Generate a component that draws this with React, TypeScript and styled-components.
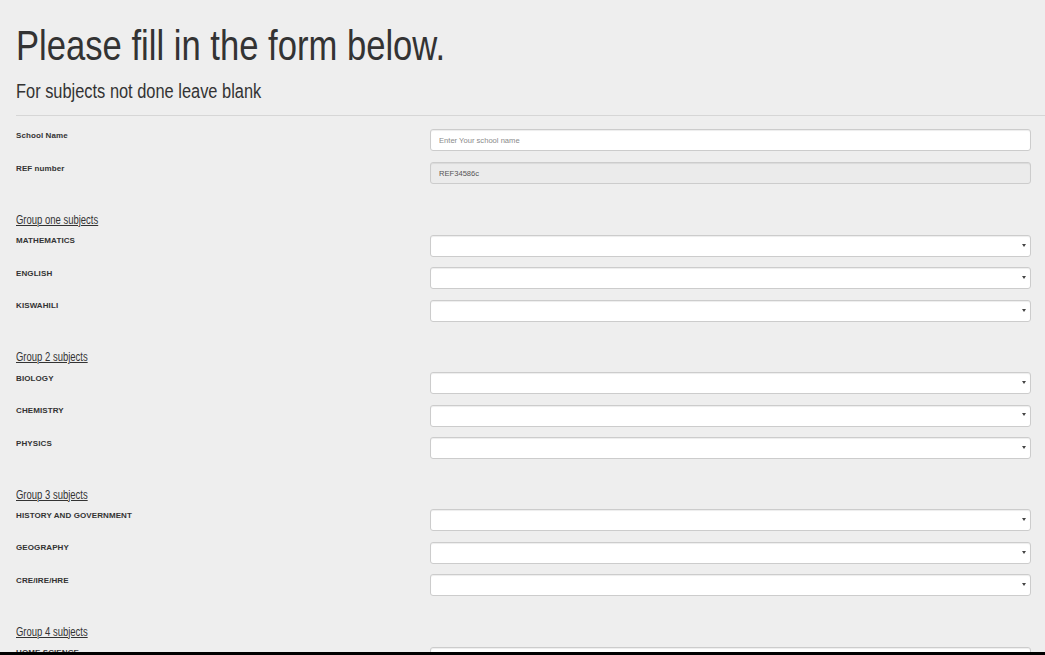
import React from "react";
import styled, { createGlobalStyle } from "styled-components";

const GlobalStyle = createGlobalStyle`
  html, body {
    margin: 0;
    padding: 0;
    background: #eeeeee;
    overflow: hidden;
  }
  body {
    font-family: "Liberation Sans", Arial, sans-serif;
    color: #333333;
  }
  * { box-sizing: border-box; }
`;

const Page = styled.div`
  padding-top: 21px;
  padding-bottom: 40px;
`;

/* The reference renders its headings in a narrow Helvetica; no narrow face is
   installed, so the regular face is condensed horizontally. */
const Narrow = styled.span<{ $scale: number }>`
  display: inline-block;
  transform: scaleX(${(p) => p.$scale});
  transform-origin: left center;
  white-space: nowrap;
`;

const Title = styled.h1`
  margin: 0 0 0 16px;
  font-family: "Liberation Sans", Arial, sans-serif;
  font-weight: normal;
  font-size: 43px;
  line-height: 48px;
  color: #333333;
`;

const Subtitle = styled.h4`
  margin: 10px 0 0 16px;
  font-family: "Liberation Sans", Arial, sans-serif;
  font-weight: normal;
  font-size: 20px;
  line-height: 24px;
  color: #333333;
`;

const Rule = styled.hr`
  margin: 12px 0 0 16px;
  border: 0;
  border-top: 1px solid #d6d6d6;
  height: 0;
`;

const Form = styled.form`
  display: flex;
  flex-direction: column;
  padding: 13px 14px 0 16px;
`;

const TopFields = styled.div`
  display: flex;
  flex-direction: column;
  gap: 11px;
`;

const Row = styled.div`
  display: grid;
  grid-template-columns: 414px 1fr;
  height: 22px;
`;

const Label = styled.label`
  padding-top: 1px;
  font-family: "Liberation Sans", Arial, sans-serif;
  font-weight: bold;
  font-size: 8px;
  line-height: 11px;
  letter-spacing: 0.1px;
  color: #333333;
`;

const TextInput = styled.input<{ $disabled?: boolean }>`
  width: 100%;
  height: 22px;
  padding: 0 8px;
  border: 1px solid #cccccc;
  border-radius: 3px;
  background: ${(p) => (p.$disabled ? "#ebebeb" : "#ffffff")};
  box-shadow: inset 0 1px 1px rgba(0, 0, 0, 0.075);
  font-family: "Liberation Sans", Arial, sans-serif;
  font-size: 7.6px;
  color: #555555;
  outline: none;
  &::placeholder {
    color: #8a8a8a;
  }
`;

const SelectWrap = styled.div`
  position: relative;
  &::after {
    content: "";
    position: absolute;
    right: 5px;
    top: 50%;
    margin-top: -2px;
    border-left: 2px solid transparent;
    border-right: 2px solid transparent;
    border-top: 3px solid #444444;
  }
`;

const Select = styled.select`
  appearance: none;
  -webkit-appearance: none;
  width: 100%;
  height: 22px;
  padding: 0 8px;
  border: 1px solid #cccccc;
  border-radius: 3px;
  background: #ffffff;
  box-shadow: inset 0 1px 1px rgba(0, 0, 0, 0.075);
  font-family: "Liberation Sans", Arial, sans-serif;
  font-size: 7.6px;
  color: #555555;
  outline: none;
`;

const Group = styled.section`
  display: flex;
  flex-direction: column;
  align-items: flex-start;
  margin-top: 29px;
`;

const GroupTitle = styled.a`
  display: inline-block;
  margin-bottom: 7.3px;
  font-family: "Liberation Sans", Arial, sans-serif;
  font-size: 12px;
  line-height: 14px;
  color: #333333;
  text-decoration: underline;
  white-space: nowrap;
  transform: scaleX(0.79);
  transform-origin: left center;
`;

const GroupRows = styled.div`
  display: flex;
  flex-direction: column;
  gap: 10.5px;
  align-self: stretch;
`;

const BottomBar = styled.div`
  position: fixed;
  left: 0;
  right: 0;
  bottom: 0;
  height: 3px;
  background: #000000;
`;

const groups: { title: string; subjects: string[] }[] = [
  { title: "Group one subjects", subjects: ["MATHEMATICS", "ENGLISH", "KISWAHILI"] },
  { title: "Group 2 subjects", subjects: ["BIOLOGY", "CHEMISTRY", "PHYSICS"] },
  { title: "Group 3 subjects", subjects: ["HISTORY AND GOVERNMENT", "GEOGRAPHY", "CRE/IRE/HRE"] },
  { title: "Group 4 subjects", subjects: ["HOME SCIENCE", "AGRICULTURE", "COMPUTER STUDIES"] },
];

const grades = ["", "A", "A-", "B+", "B", "B-", "C+", "C", "C-", "D+", "D", "D-", "E"];

export default function App() {
  return (
    <>
      <GlobalStyle />
      <Page>
        <Title>
          <Narrow $scale={0.805}>Please fill in the form below.</Narrow>
        </Title>
        <Subtitle>
          <Narrow $scale={0.82}>For subjects not done leave blank</Narrow>
        </Subtitle>
        <Rule />
        <Form onSubmit={(e) => e.preventDefault()}>
          <TopFields>
            <Row>
              <Label>School Name</Label>
              <TextInput placeholder="Enter Your school name" />
            </Row>
            <Row>
              <Label>REF number</Label>
              <TextInput $disabled readOnly value="REF34586c" />
            </Row>
          </TopFields>
          {groups.map((g) => (
            <Group key={g.title}>
              <GroupTitle href="#">{g.title}</GroupTitle>
              <GroupRows>
                {g.subjects.map((s) => (
                  <Row key={s}>
                    <Label>{s}</Label>
                    <SelectWrap>
                      <Select defaultValue="">
                        {grades.map((gr) => (
                          <option key={gr} value={gr}>
                            {gr}
                          </option>
                        ))}
                      </Select>
                    </SelectWrap>
                  </Row>
                ))}
              </GroupRows>
            </Group>
          ))}
        </Form>
      </Page>
      <BottomBar />
    </>
  );
}
